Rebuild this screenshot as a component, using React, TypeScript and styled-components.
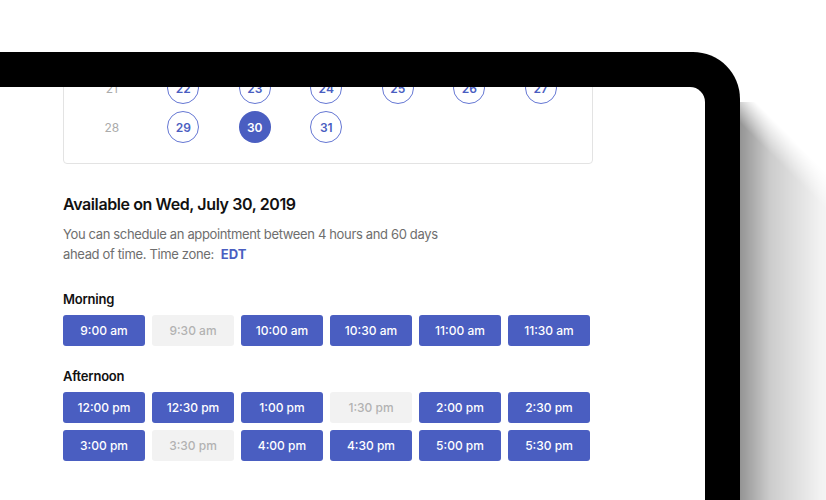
import styled, { createGlobalStyle, css } from "styled-components";

const BLUE = "#4a5ec1";

const GlobalStyle = createGlobalStyle`
  html, body {
    margin: 0;
    padding: 0;
    background: #ffffff;
    overflow: hidden;
  }
  body {
    font-family: Inter, "Liberation Sans", sans-serif;
    -webkit-font-smoothing: antialiased;
  }
`;

const Stage = styled.div`
  width: 826px;
  height: 500px;
  padding-top: 52px;
  box-sizing: border-box;
  overflow: hidden;
`;

const Device = styled.div`
  position: relative;
  margin-left: -35px;
  width: 775px;
  height: 520px;
  box-sizing: border-box;
  padding: 35px 35px 0 35px;
  background: #000;
  border-top-right-radius: 47px;

  &::after {
    content: "";
    position: absolute;
    left: 100%;
    top: 50px;
    width: 130px;
    height: 100%;
    background: linear-gradient(
      to right,
      rgba(0, 0, 0, 0.42),
      rgba(0, 0, 0, 0.2) 30px,
      rgba(0, 0, 0, 0.05) 80px,
      rgba(0, 0, 0, 0) 120px
    );
    -webkit-mask-image: linear-gradient(225deg, transparent 44%, #000 58%),
      linear-gradient(#000, #000);
    -webkit-mask-size: 130px 130px, 100% 100%;
    -webkit-mask-position: 0 0, 0 130px;
    -webkit-mask-repeat: no-repeat;
    mask-image: linear-gradient(225deg, transparent 44%, #000 58%),
      linear-gradient(#000, #000);
    mask-size: 130px 130px, 100% 100%;
    mask-position: 0 0, 0 130px;
    mask-repeat: no-repeat;
  }
`;

const Screen = styled.div`
  height: 100%;
  background: #fff;
  border-top-right-radius: 15px;
  overflow: hidden;
  padding-left: 63px;
  box-sizing: border-box;
`;

const Content = styled.div`
  width: 530px;
`;

const CalendarCard = styled.div`
  margin-top: -30px;
  border: 1px solid #e3e3e3;
  border-radius: 4px;
  padding: 14px 0 20px 12px;
  display: grid;
  grid-template-columns: repeat(7, 71.5px);
  row-gap: 7px;
`;

const Day = styled.div<{ $state: "past" | "open" | "selected" | "empty" }>`
  justify-self: center;
  width: 32px;
  height: 32px;
  box-sizing: border-box;
  border-radius: 50%;
  display: flex;
  align-items: center;
  justify-content: center;
  font-size: 12px;
  font-weight: 600;

  ${({ $state }) =>
    $state === "past" &&
    css`
      color: #ababab;
      font-weight: 400;
    `}
  ${({ $state }) =>
    $state === "open" &&
    css`
      color: ${BLUE};
      border: 1px solid #6577d3;
    `}
  ${({ $state }) =>
    $state === "selected" &&
    css`
      color: #fff;
      background: ${BLUE};
    `}
`;

const Heading = styled.h2`
  margin: 29px 0 0;
  font-size: 16px;
  font-weight: 600;
  letter-spacing: -0.4px;
  color: #111;
  line-height: 22px;
`;

const Note = styled.p`
  margin: 9px 0 0;
  width: 400px;
  font-size: 13px;
  letter-spacing: -0.35px;
  line-height: 20px;
  color: #6e6e6e;

  strong {
    color: ${BLUE};
    font-weight: 700;
    letter-spacing: 0;
    margin-left: 7px;
  }
`;

const GroupLabel = styled.h3<{ $top: number }>`
  margin: ${({ $top }) => $top}px 0 7px;
  font-size: 13px;
  font-weight: 600;
  letter-spacing: -0.2px;
  color: #111;
  line-height: 18px;
`;

const SlotGrid = styled.div`
  display: grid;
  grid-template-columns: repeat(6, 82px);
  column-gap: 7px;
  row-gap: 7px;
`;

const Slot = styled.button<{ $disabled?: boolean }>`
  height: 31px;
  border: none;
  border-radius: 3px;
  font-family: inherit;
  font-size: 12px;
  font-weight: 500;
  padding: 0;
  background: ${({ $disabled }) => ($disabled ? "#f2f2f2" : BLUE)};
  color: ${({ $disabled }) => ($disabled ? "#b2b2b2" : "#fff")};
`;

type DayState = "past" | "open" | "selected" | "empty";

const days: { n: string; s: DayState }[] = [
  { n: "21", s: "past" },
  { n: "22", s: "open" },
  { n: "23", s: "open" },
  { n: "24", s: "open" },
  { n: "25", s: "open" },
  { n: "26", s: "open" },
  { n: "27", s: "open" },
  { n: "28", s: "past" },
  { n: "29", s: "open" },
  { n: "30", s: "selected" },
  { n: "31", s: "open" },
];

const morning = [
  { t: "9:00 am" },
  { t: "9:30 am", off: true },
  { t: "10:00 am" },
  { t: "10:30 am" },
  { t: "11:00 am" },
  { t: "11:30 am" },
];

const afternoon = [
  { t: "12:00 pm" },
  { t: "12:30 pm" },
  { t: "1:00 pm" },
  { t: "1:30 pm", off: true },
  { t: "2:00 pm" },
  { t: "2:30 pm" },
  { t: "3:00 pm" },
  { t: "3:30 pm", off: true },
  { t: "4:00 pm" },
  { t: "4:30 pm" },
  { t: "5:00 pm" },
  { t: "5:30 pm" },
];

export default function App() {
  return (
    <>
      <GlobalStyle />
      <Stage>
        <Device>
          <Screen>
            <Content>
              <CalendarCard>
                {days.map((d) => (
                  <Day key={d.n} $state={d.s}>
                    {d.n}
                  </Day>
                ))}
              </CalendarCard>

              <Heading>Available on Wed, July 30, 2019</Heading>
              <Note>
                You can schedule an appointment between 4 hours and 60 days
                <br />
                ahead of time. Time zone:
                <strong>EDT</strong>
              </Note>

              <GroupLabel $top={26}>Morning</GroupLabel>
              <SlotGrid>
                {morning.map((m) => (
                  <Slot key={m.t} $disabled={m.off}>
                    {m.t}
                  </Slot>
                ))}
              </SlotGrid>

              <GroupLabel $top={21}>Afternoon</GroupLabel>
              <SlotGrid>
                {afternoon.map((a) => (
                  <Slot key={a.t} $disabled={a.off}>
                    {a.t}
                  </Slot>
                ))}
              </SlotGrid>
            </Content>
          </Screen>
        </Device>
      </Stage>
    </>
  );
}
